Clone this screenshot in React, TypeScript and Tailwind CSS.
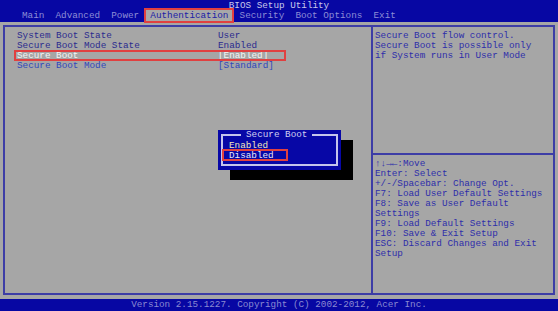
import React from 'react';

const rows = [
  { label: 'System Boot State', value: 'User', tone: 'text-[#2b2b8e]' },
  { label: 'Secure Boot Mode State', value: 'Enabled', tone: 'text-[#2b2b8e]' },
  { label: 'Secure Boot', value: '[Enabled]', tone: 'text-[#f4f4f4]', marked: true },
  { label: 'Secure Boot Mode', value: '[Standard]', tone: 'text-[#3048bc]' },
];

const help = [
  'Enter: Select',
  '+/-/Spacebar: Change Opt.',
  'F7: Load User Default Settings',
  'F8: Save as User Default',
  'Settings',
  'F9: Load Default Settings',
  'F10: Save & Exit Setup',
  'ESC: Discard Changes and Exit',
  'Setup',
];

const App: React.FC = () => {
  return (
    <div className="relative w-[558px] h-[311px] overflow-hidden bg-[#a6a6a6] font-['Liberation_Mono','DejaVu_Sans_Mono',monospace] text-[9.3px] leading-[10px] whitespace-pre">
      <header className="h-[22px] bg-[#0707a3]">
        <div className="h-[10px] pt-[1px] text-center text-[#c9c9ea]">BIOS Setup Utility</div>
        <nav className="h-[12px] pl-[22px] leading-[11px] text-[#8d8dd6]">
          {'Main  Advanced  Power  '}
          <span className="inline-block -mx-[4px] px-[4px] pt-[1px] leading-[10px] bg-[#a8a8a8] text-[#1c1ca6] ring-2 ring-[#e04040]">
            Authentication
          </span>
          {'  Security  Boot Options  Exit'}
        </nav>
      </header>

      <main className="h-[277px] pt-[3px] px-[3px] pb-[4px]">
        <div className="flex h-full border-2 border-[#3d3da6]">
          <section className="w-[368px] border-r-2 border-[#3d3da6] pl-[12px] pt-[4px]">
            {rows.map((r) => (
              <div key={r.label} className={`relative grid grid-cols-[201px_1fr] h-[10px] ${r.tone}`}>
                <span>{r.label}</span>
                <span>{r.value}</span>
                {r.marked && (
                  <span className="absolute left-[-3px] -top-[1px] w-[272px] h-[11px] border-2 border-[#e04040]" />
                )}
              </div>
            ))}
          </section>

          <section className="flex-1 flex flex-col text-[#2e2eaa]">
            <div className="h-[128px] pl-[2px] pt-[4px] border-b-2 border-[#3d3da6]">
              <div>Secure Boot flow control.</div>
              <div>Secure Boot is possible only</div>
              <div>if System runs in User Mode</div>
            </div>
            <div className="pl-[2px] pt-[4px]">
              <div>↑↓→←:Move</div>
              {help.map((h, i) => (
                <div key={i}>{h}</div>
              ))}
            </div>
          </section>
        </div>
      </main>

      <footer className="h-[12px] bg-[#0707a3] text-center leading-[12px] text-[#8a8ad2]">
        Version 2.15.1227. Copyright (C) 2002-2012, Acer Inc.
      </footer>

      <div className="absolute left-[218px] top-[130px] w-[123px] h-[40px] bg-[#0707a6] shadow-[12px_10px_0_0_#000] pt-[4px] px-[3px] pb-[4px]">
        <div className="relative h-full border-2 border-[#c4c4ec] pt-[4px] pl-[6px]">
          <span className="absolute -top-[6px] left-[18px] px-[5px] bg-[#0707a6] text-[#d0d0f0]">Secure Boot</span>
          <div className="h-[10px] pt-[1px] text-[#f2e8bc]">Enabled</div>
          <div className="relative h-[10px] pt-[1px] text-[#e6e6f6]">
            Disabled
            <span className="absolute left-[-7px] -top-[1px] w-[66px] h-[12px] border-2 border-[#e04040]" />
          </div>
        </div>
      </div>
    </div>
  );
};

export default App;
